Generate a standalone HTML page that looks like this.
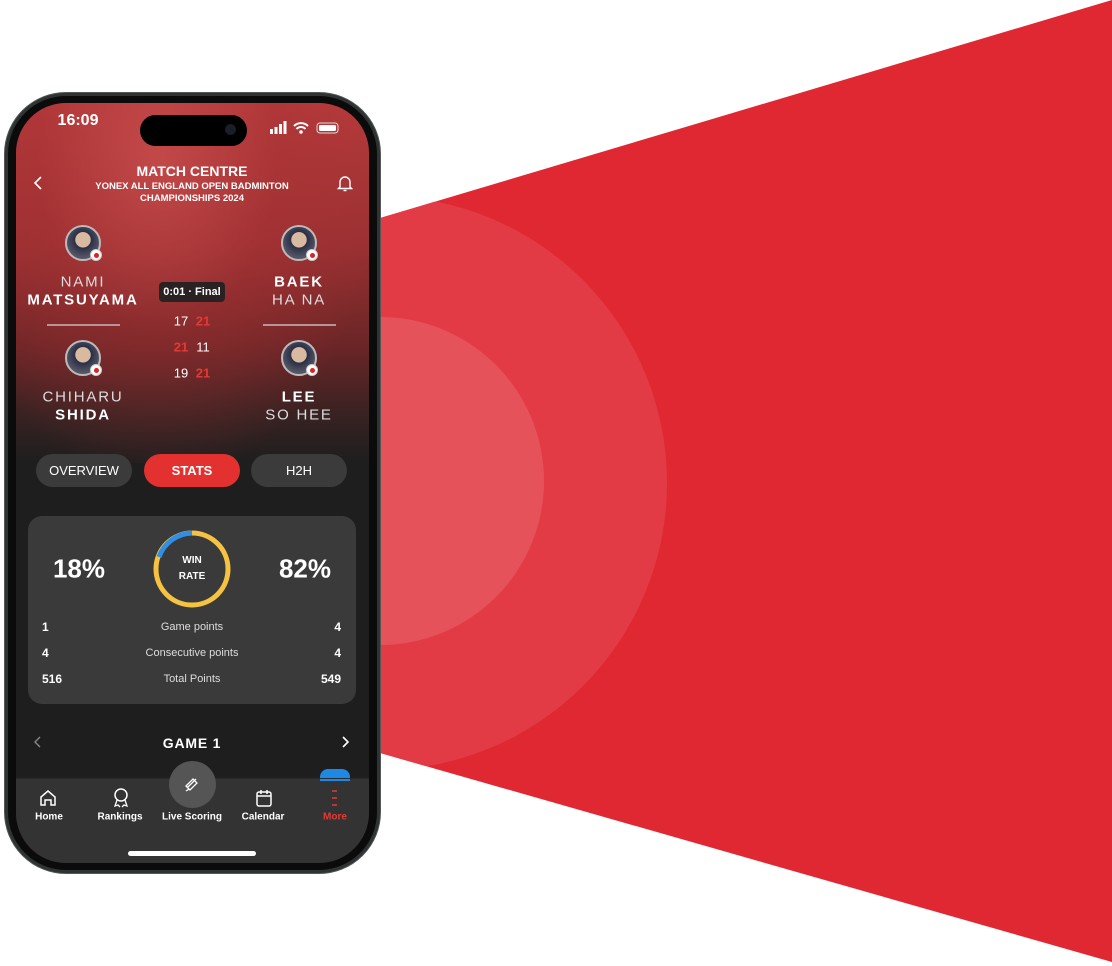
<!DOCTYPE html>
<html><head><meta charset="utf-8"><style>
*{margin:0;padding:0;box-sizing:border-box}
body{width:1112px;height:966px;background:#fff;position:relative;overflow:hidden;font-family:"Liberation Sans",sans-serif;color:#fff}
.a{position:absolute}
.c{position:absolute;transform:translate(-50%,-50%);white-space:nowrap;text-align:center}
.av{position:absolute;width:36px;height:36px;border-radius:50%;border:2px solid #bbb;background:radial-gradient(circle at 50% 40%,#d9b9a0 0 30%,#2a2f45 32%,#556 70%);transform:translate(-50%,-50%)}
.av i{position:absolute;right:-3px;bottom:-2px;width:12px;height:12px;border-radius:50%;background:#fff;border:1px solid #ccc}
.av i:after{content:"";position:absolute;left:3px;top:3px;width:5px;height:5px;border-radius:50%;background:#d22}
.nm{font-size:15px;letter-spacing:1.8px}
.b{font-weight:bold}
.tab{position:absolute;top:454px;height:33px;width:96px;border-radius:17px;background:#3b3b3b;font-size:13px;display:flex;align-items:center;justify-content:center}
.lab{font-size:10px;font-weight:bold}
</style></head><body>
<svg class="a" style="left:0;top:0" width="1112" height="966">
<defs><clipPath id="cp"><polygon points="380,218 1112,0 1112,962 380,753"/></clipPath></defs>
<polygon points="380,218 1112,0 1112,962 380,753" fill="#e02832"/>
<g clip-path="url(#cp)"><circle cx="380" cy="483" r="287" fill="#e33b45"/><circle cx="380" cy="481" r="164" fill="#e65259"/></g>
</svg>
<div class="a" style="left:4px;top:92px;width:377px;height:782px;border-radius:62px;background:#2e3334;border:1px solid #555"></div>
<div class="a" style="left:8px;top:96px;width:369px;height:774px;border-radius:58px;background:#0b0b0b"></div>
<div class="a" style="left:16px;top:103px;width:353px;height:760px;border-radius:50px;overflow:hidden;background:#1e1e1e">
 <div class="a" style="left:0;top:0;width:353px;height:360px;background:radial-gradient(ellipse at 40% 15%,rgba(205,80,80,.7) 0%,rgba(170,50,52,.4) 40%,rgba(0,0,0,0) 75%),linear-gradient(#b53a3b 0%,#9a3032 40%,#6a2526 68%,#3a2222 86%,#1e1e1e 100%)"></div>
 <div class="a" style="left:0;top:675px;width:353px;height:85px;background:#333"></div>
</div>
<div class="c b" style="left:78px;top:121px;font-size:16px">16:09</div>
<div class="a" style="left:140px;top:115px;width:107px;height:31px;border-radius:16px;background:#000"></div>
<div class="a" style="left:225px;top:124px;width:11px;height:11px;border-radius:50%;background:#1a1d2a"></div>
<svg class="a" style="left:268px;top:120px" width="75" height="16">
<rect x="2" y="9" width="3" height="5" fill="#fff"/><rect x="6.5" y="7" width="3" height="7" fill="#fff"/><rect x="11" y="4" width="3" height="10" fill="#fff"/><rect x="15.5" y="1" width="3" height="13" fill="#fff"/>
<path d="M26 6a10 10 0 0 1 14 0M28.5 9a6 6 0 0 1 9 0" stroke="#fff" stroke-width="2" fill="none"/><circle cx="33" cy="12" r="1.8" fill="#fff"/>
<rect x="49" y="3" width="21" height="10" rx="3" fill="none" stroke="#ddd" stroke-width="1"/><rect x="51" y="5" width="17" height="6" rx="1.5" fill="#fff"/>
</svg>
<div class="c b" style="left:192px;top:171px;font-size:14px">MATCH CENTRE</div>
<div class="c b" style="left:192px;top:193px;font-size:9.5px;line-height:12px">YONEX ALL ENGLAND OPEN BADMINTON<br>CHAMPIONSHIPS 2024</div>
<svg class="a" style="left:32px;top:175px" width="12" height="16"><path d="M9 2L3 8l6 6" stroke="#fff" stroke-width="1.6" fill="none"/></svg>
<svg class="a" style="left:337px;top:174px" width="16" height="18"><path d="M3 13V8a5 5 0 0 1 10 0v5l1.5 1.5h-13z" stroke="#fff" stroke-width="1.4" fill="none"/><path d="M6.5 16.5h3" stroke="#fff" stroke-width="1.4"/></svg>
<div class="av" style="left:83px;top:243px"><i></i></div>
<div class="av" style="left:299px;top:243px"><i></i></div>
<div class="av" style="left:83px;top:358px"><i></i></div>
<div class="av" style="left:299px;top:358px"><i></i></div>
<div class="c nm" style="left:83px;top:282px;color:#ddd">NAMI</div>
<div class="c nm b" style="left:83px;top:300px">MATSUYAMA</div>
<div class="c nm b" style="left:299px;top:282px">BAEK</div>
<div class="c nm" style="left:299px;top:300px;color:#ddd">HA NA</div>
<div class="a" style="left:47px;top:324px;width:73px;height:2px;background:#b79595"></div>
<div class="a" style="left:263px;top:324px;width:73px;height:2px;background:#b79595"></div>
<div class="c nm" style="left:83px;top:397px;color:#ddd">CHIHARU</div>
<div class="c nm b" style="left:83px;top:415px">SHIDA</div>
<div class="c nm b" style="left:299px;top:397px">LEE</div>
<div class="c nm" style="left:299px;top:415px;color:#ddd">SO HEE</div>
<div class="a b" style="left:159px;top:282px;width:66px;height:20px;border-radius:4px;background:#2a2222;font-size:11px;display:flex;align-items:center;justify-content:center">0:01 · Final</div>
<div class="c" style="left:181px;top:321px;font-size:13px">17</div><div class="c b" style="left:203px;top:321px;font-size:13px;color:#e53935">21</div>
<div class="c b" style="left:181px;top:347px;font-size:13px;color:#e53935">21</div><div class="c" style="left:203px;top:347px;font-size:13px">11</div>
<div class="c" style="left:181px;top:373px;font-size:13px">19</div><div class="c b" style="left:203px;top:373px;font-size:13px;color:#e53935">21</div>
<div class="tab" style="left:36px">OVERVIEW</div>
<div class="tab b" style="left:144px;background:#e2312f">STATS</div>
<div class="tab" style="left:251px">H2H</div>
<div class="a" style="left:28px;top:516px;width:328px;height:188px;border-radius:14px;background:#3a3a3a"></div>
<svg class="a" style="left:152px;top:529px" width="80" height="80"><circle cx="40" cy="40" r="36" stroke="#f5c242" stroke-width="5" fill="none"/><path d="M7 28A36 36 0 0 1 40 4" stroke="#2f8ee5" stroke-width="5" fill="none"/></svg>
<div class="c b" style="left:192px;top:569px;font-size:10px;line-height:16px">WIN<br>RATE</div>
<div class="c b" style="left:79px;top:569px;font-size:26px">18%</div>
<div class="c b" style="left:305px;top:569px;font-size:26px">82%</div>
<div class="a b" style="left:42px;top:620px;font-size:12px">1</div><div class="c" style="left:192px;top:627px;font-size:11px;color:#ddd">Game points</div><div class="a b" style="right:771px;top:620px;font-size:12px">4</div>
<div class="a b" style="left:42px;top:646px;font-size:12px">4</div><div class="c" style="left:192px;top:653px;font-size:11px;color:#ddd">Consecutive points</div><div class="a b" style="right:771px;top:646px;font-size:12px">4</div>
<div class="a b" style="left:42px;top:672px;font-size:12px">516</div><div class="c" style="left:192px;top:679px;font-size:11px;color:#ddd">Total Points</div><div class="a b" style="right:771px;top:672px;font-size:12px">549</div>
<svg class="a" style="left:33px;top:735px" width="10" height="14"><path d="M7 2L2 7l5 5" stroke="#888" stroke-width="1.4" fill="none"/></svg>
<div class="c b" style="left:192px;top:743px;font-size:14px;letter-spacing:.8px">GAME 1</div>
<svg class="a" style="left:340px;top:735px" width="10" height="14"><path d="M3 2l5 5-5 5" stroke="#fff" stroke-width="1.6" fill="none"/></svg>
<div class="a" style="left:320px;top:769px;width:30px;height:12px;border-radius:8px 8px 0 0;background:#1e88e5"></div>
<div class="a" style="left:16px;top:778px;width:353px;height:1px;background:#2a2a2a"></div>
<div class="a" style="left:169px;top:761px;width:47px;height:47px;border-radius:50%;background:#555"></div>
<svg class="a" style="left:183px;top:775px" width="18" height="18"><path d="M4 13l9-9M3 11l7-7 4 4-7 7zM6 14l-3 2" stroke="#fff" stroke-width="1.3" fill="none"/></svg>
<svg class="a" style="left:38px;top:788px" width="20" height="20"><path d="M3 9l7-6 7 6v8h-4v-5H7v5H3z" stroke="#fff" stroke-width="1.5" fill="none"/></svg>
<svg class="a" style="left:111px;top:787px" width="20" height="22"><circle cx="10" cy="8" r="6" stroke="#fff" stroke-width="1.5" fill="none"/><path d="M6 13l-2 6 3-1 2 2M14 13l2 6-3-1-2 2" stroke="#fff" stroke-width="1.3" fill="none"/></svg>
<svg class="a" style="left:254px;top:788px" width="20" height="20"><rect x="3" y="4" width="14" height="14" rx="2" stroke="#fff" stroke-width="1.5" fill="none"/><path d="M3 8h14M7 2v4M13 2v4" stroke="#fff" stroke-width="1.5"/></svg>
<svg class="a" style="left:330px;top:788px" width="10" height="20"><path d="M2 3h5M2 10h5M2 17h5" stroke="#e53935" stroke-width="1.6"/></svg>
<div class="c lab" style="left:49px;top:817px">Home</div>
<div class="c lab" style="left:120px;top:817px">Rankings</div>
<div class="c lab" style="left:192px;top:817px">Live Scoring</div>
<div class="c lab" style="left:263px;top:817px">Calendar</div>
<div class="c lab" style="left:335px;top:817px;color:#e53935">More</div>
<div class="a" style="left:128px;top:851px;width:128px;height:5px;border-radius:3px;background:#fff"></div>
</body></html>
